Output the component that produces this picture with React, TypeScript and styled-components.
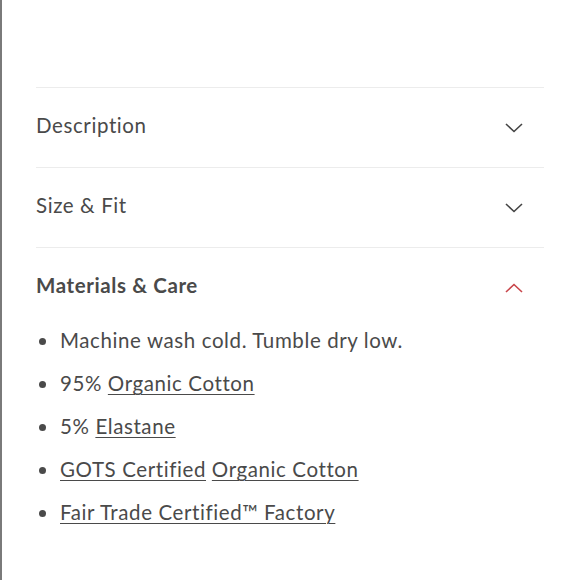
import styled, { createGlobalStyle } from "styled-components";

const GlobalStyle = createGlobalStyle`
  html, body {
    margin: 0;
    padding: 0;
    background: #fff;
  }
  body {
    font-family: "Lato", "Liberation Sans", sans-serif;
    color: #444;
  }
`;

const Page = styled.div`
  width: 580px;
  height: 580px;
  box-sizing: border-box;
  border-left: 2px solid #7a7a7a;
  padding: 87px 36px 0 34px;
`;

const Section = styled.div`
  border-top: 1px solid #ececec;
`;

const Header = styled.div`
  height: 79px;
  display: flex;
  align-items: center;
  justify-content: space-between;
  padding-right: 21px;
`;

const Title = styled.span<{ $open?: boolean }>`
  font-size: 20.5px;
  font-weight: ${(p) => (p.$open ? 700 : 400)};
  color: #4a4a4a;
  letter-spacing: 0.6px;
  margin-bottom: 5px;
`;

const List = styled.ul`
  list-style: none;
  margin: 0;
  padding: 1px 0 0 0;
  display: flex;
  flex-direction: column;
  gap: 19px;
`;

const Item = styled.li`
  display: flex;
  align-items: center;
  font-size: 20.5px;
  line-height: 24px;
  color: #4a4a4a;
  letter-spacing: 0.6px;
  &::before {
    content: "";
    width: 7px;
    height: 7px;
    border-radius: 50%;
    background: #4a4a4a;
    margin: 2px 14px 0 3px;
    flex: none;
  }
`;

const Link = styled.span`
  text-decoration: underline;
  text-decoration-thickness: 1px;
  text-underline-offset: 3px;
`;

function Chevron({ up }: { up?: boolean }) {
  return (
    <svg width="18" height="10" viewBox="0 0 18 10" fill="none">
      <path
        d={up ? "M1 9 L9 1.5 L17 9" : "M1 1 L9 8.5 L17 1"}
        stroke={up ? "#c8454a" : "#444"}
        strokeWidth="1.6"
      />
    </svg>
  );
}

export default function App() {
  return (
    <>
      <GlobalStyle />
      <Page>
        <Section>
          <Header>
            <Title>Description</Title>
            <Chevron />
          </Header>
        </Section>
        <Section>
          <Header>
            <Title>Size &amp; Fit</Title>
            <Chevron />
          </Header>
        </Section>
        <Section>
          <Header>
            <Title $open>Materials &amp; Care</Title>
            <Chevron up />
          </Header>
          <List>
            <Item>Machine wash cold. Tumble dry low.</Item>
            <Item>
              95%&nbsp;<Link>Organic Cotton</Link>
            </Item>
            <Item>
              5%&nbsp;<Link>Elastane</Link>
            </Item>
            <Item>
              <Link>GOTS Certified</Link>&nbsp;<Link>Organic Cotton</Link>
            </Item>
            <Item>
              <Link>Fair Trade Certified™ Factory</Link>
            </Item>
          </List>
        </Section>
      </Page>
    </>
  );
}
